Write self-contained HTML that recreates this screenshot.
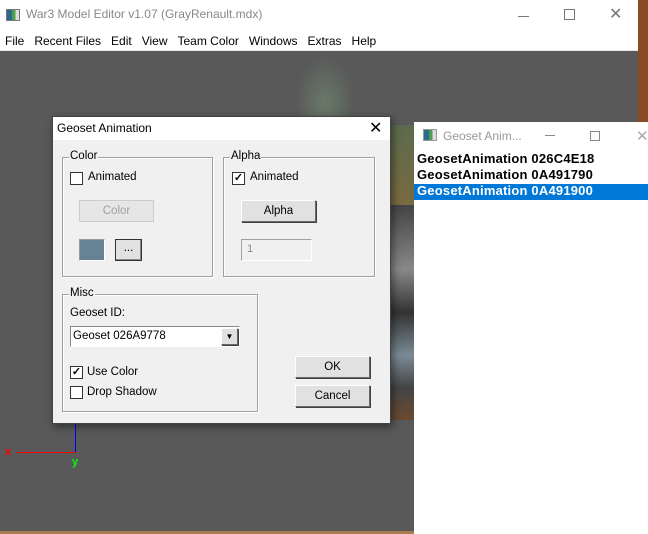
<!DOCTYPE html>
<html><head><style>
*{margin:0;padding:0;box-sizing:border-box}
body{width:648px;height:534px;overflow:hidden;position:relative;background:#8a4a25;font-family:"Liberation Sans",sans-serif;font-size:12px;color:#000}
.a{position:absolute}
.grp{position:absolute;border:1px solid #a0a0a0;box-shadow:inset 1px 1px 0 #fff,1px 1px 0 #fff}
.grp span{position:absolute;top:-8px;left:6px;background:#f0f0f0;padding:0 1px;font-size:11.5px}
.cb{position:absolute;width:13px;height:13px;background:#fff;border:1px solid #333;font-size:11px;line-height:10px;text-align:center;font-weight:bold}
.btn{position:absolute;background:#e1e1e1;border:1px solid #fff;border-right-color:#696969;border-bottom-color:#696969;box-shadow:1px 1px 0 #404040;text-align:center;font-size:11.5px}
.lbl{position:absolute;font-size:11.5px}
</style></head><body>
<div class="a" style="left:0;top:0;width:638px;height:531px;background:#595959"></div>
<div class="a" style="left:0;top:0;width:638px;height:51px;background:#fff;border-bottom:1px solid #e8e8e8"></div>
<div class="a" style="left:6px;top:9px;width:14px;height:12px;background:linear-gradient(90deg,#2a6a8a 40%,#4c9f4c 40%,#4c9f4c 70%,#ddd 70%);border:1px solid #777"></div>
<div class="lbl" style="left:26px;top:7px;color:#888;font-size:12px">War3 Model Editor v1.07 (GrayRenault.mdx)</div>
<div class="a" style="left:518px;top:16px;width:11px;height:1px;background:#777"></div>
<div class="a" style="left:564px;top:9px;width:11px;height:11px;border:1px solid #777"></div>
<div class="lbl" style="left:609px;top:4px;color:#777;font-size:16px">✕</div>
<div class="lbl" style="left:5px;top:34px;font-size:12px;word-spacing:0">File&nbsp;&nbsp;&nbsp;Recent Files&nbsp;&nbsp;&nbsp;Edit&nbsp;&nbsp;&nbsp;View&nbsp;&nbsp;&nbsp;Team Color&nbsp;&nbsp;&nbsp;Windows&nbsp;&nbsp;&nbsp;Extras&nbsp;&nbsp;&nbsp;Help</div>
<div class="a" style="left:295px;top:55px;width:60px;height:95px;border-radius:30px;background:radial-gradient(rgba(110,135,110,.7),rgba(89,89,89,0) 70%)"></div>
<div class="a" style="left:391px;top:125px;width:23px;height:80px;background:linear-gradient(#5b6b4d,#7a6a40)"></div>
<div class="a" style="left:391px;top:205px;width:23px;height:215px;background:linear-gradient(#444,#888 30%,#333 50%,#7a8a95 70%,#444 85%,#6a4a30)"></div>
<div class="a" style="left:0;top:531px;width:648px;height:3px;background:#a87a50"></div>
<div class="a" style="left:75px;top:424px;width:1px;height:29px;background:#0000ff"></div>
<div class="a" style="left:17px;top:452px;width:59px;height:1px;background:#f00"></div>
<div class="lbl" style="left:5px;top:446px;color:#f00;font-weight:bold;font-size:11px">x</div>
<div class="lbl" style="left:72px;top:456px;color:#0f0;font-weight:bold;font-size:11px">y</div>
<div class="a" style="left:52px;top:116px;width:339px;height:308px;background:#f0f0f0;border:1px solid #444;box-shadow:2px 3px 8px rgba(0,0,0,.45)"></div>
<div class="a" style="left:53px;top:117px;width:337px;height:23px;background:#fff"></div>
<div class="lbl" style="left:57px;top:121px;font-size:12px">Geoset Animation</div>
<div class="lbl" style="left:369px;top:118px;font-size:16px">✕</div>
<div class="grp" style="left:62px;top:157px;width:151px;height:120px"><span>Color</span></div>
<div class="grp" style="left:223px;top:157px;width:152px;height:120px"><span>Alpha</span></div>
<div class="grp" style="left:62px;top:294px;width:196px;height:118px"><span>Misc</span></div>
<div class="cb" style="left:70px;top:172px"></div><div class="lbl" style="left:88px;top:171px">Animated</div>
<div class="cb" style="left:232px;top:172px">✓</div><div class="lbl" style="left:250px;top:171px">Animated</div>
<div class="btn" style="left:79px;top:200px;width:75px;height:22px;line-height:20px;color:#a0a0a0;background:#e6e6e6;box-shadow:none;border-color:#ccc">Color</div>
<div class="btn" style="left:241px;top:200px;width:75px;height:22px;line-height:20px">Alpha</div>
<div class="a" style="left:79px;top:239px;width:26px;height:22px;background:#678294;border:1px solid #fff;border-top-color:#999;border-left-color:#999"></div>
<div class="btn" style="left:115px;top:239px;width:27px;height:22px;line-height:17px;border:1px solid #333;box-shadow:inset -1px -1px 0 #888">...</div>
<div class="a" style="left:241px;top:239px;width:71px;height:22px;border:1px solid #a0a0a0;border-right-color:#fff;border-bottom-color:#fff;background:#f0f0f0;color:#888;padding:3px 5px;font-size:11px">1</div>
<div class="lbl" style="left:70px;top:307px">Geoset ID:</div>
<div class="a" style="left:70px;top:326px;width:170px;height:21px;background:#fff;border:1px solid #888;border-right-color:#fff;border-bottom-color:#fff;padding:3px 2px;font-size:11.5px">Geoset 026A9778</div>
<div class="btn" style="left:221px;top:328px;width:17px;height:17px;font-size:8px;line-height:15px">▼</div>
<div class="cb" style="left:70px;top:366px">✓</div><div class="lbl" style="left:87px;top:366px">Use Color</div>
<div class="cb" style="left:70px;top:386px"></div><div class="lbl" style="left:87px;top:386px">Drop Shadow</div>
<div class="btn" style="left:295px;top:356px;width:75px;height:22px;line-height:20px">OK</div>
<div class="btn" style="left:295px;top:385px;width:75px;height:22px;line-height:20px">Cancel</div>
<div class="a" style="left:414px;top:122px;width:234px;height:412px;background:#fff"></div>
<div class="a" style="left:423px;top:129px;width:14px;height:12px;background:linear-gradient(90deg,#2a6a8a 40%,#4c9f4c 40%,#4c9f4c 70%,#ddd 70%);border:1px solid #999"></div>
<div class="lbl" style="left:443px;top:129px;color:#999;font-size:12px">Geoset Anim...</div>
<div class="a" style="left:545px;top:135px;width:10px;height:1px;background:#888"></div>
<div class="a" style="left:590px;top:131px;width:10px;height:10px;border:1px solid #888"></div>
<div class="lbl" style="left:636px;top:127px;color:#aaa;font-size:15px">✕</div>
<div class="a" style="left:414px;top:184px;width:234px;height:16px;background:#0078d7"></div>
<div class="lbl" style="left:417px;top:151px;font-weight:bold;font-size:13px;line-height:16px;letter-spacing:0.2px">GeosetAnimation 026C4E18<br>GeosetAnimation 0A491790<br><span style="color:#fff">GeosetAnimation 0A491900</span></div>
</body></html>
